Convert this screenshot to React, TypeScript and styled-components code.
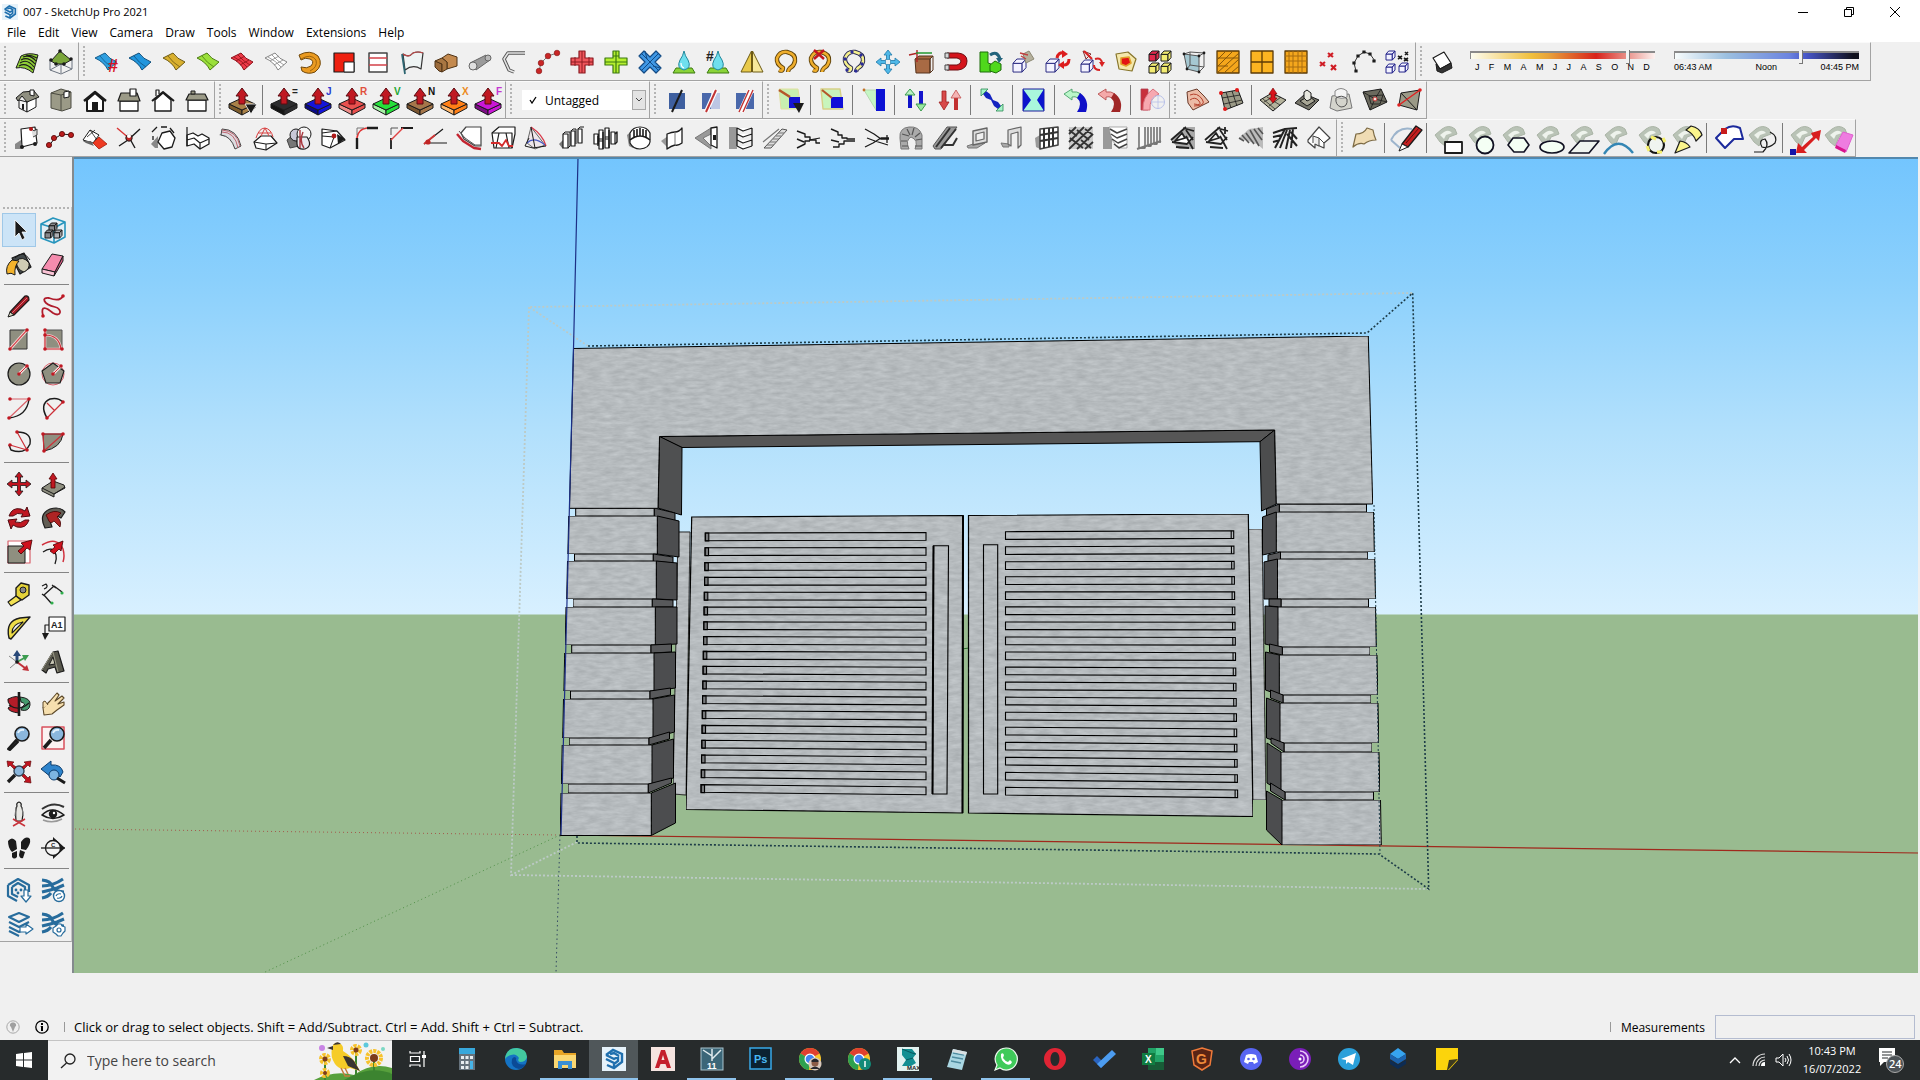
import React from "react";
import styled, { createGlobalStyle, css } from "styled-components";

const GlobalStyle = createGlobalStyle`
  * { box-sizing: border-box; }
  html, body, #root { height: 100%; }
  body { margin: 0; background: #f0f0f0; overflow: hidden; }
  body, button, input, select { font-family: "Open Sans", "Noto Sans", sans-serif; font-size: 12px; color: #000; }
  button { border: 0; padding: 0; background: transparent; }
`;

/* ------------------------------------------------------------------ */
/* Icon drawing                                                        */
/* ------------------------------------------------------------------ */

type Mark = [d: string, fill?: string, stroke?: string, width?: number];
type Label = { text: string; x: number; y: number; size: number; color: string };
type Drawing = { marks: Mark[]; label?: Label };

const K = "#1b1b1b";
const R = "#c01822";
const G = "#8f8f80";
const N = "none";

const dot = (x: number, y: number, r = 1.8) =>
  `M${x - r} ${y}a${r} ${r} 0 1 0 ${2 * r} 0a${r} ${r} 0 1 0 ${-2 * r} 0Z`;
const box = (x: number, y: number, w: number, h: number) => `M${x} ${y}h${w}v${h}h${-w}Z`;
const draw = (...marks: Mark[]): Drawing => ({ marks });

const sheet = (fill: string, edge: string, grid = false): Drawing =>
  draw(
    ["M1 8L11 3Q15 9 23 12L14 20Q10 12 1 8Z", fill, edge, 1],
    [grid ? "M4 7Q12 11 17 17M8 5Q13 11 20 15M6 11L15 6M10 15L19 10" : "M6 6Q11 13 18 17", N, edge, 0.8]
  );

const pushPull = (fill: string, side: string, text = "", color = K): Drawing => ({
  marks: [
    ["M-1 16V20L12 27V22Z", side, K, 1],
    ["M25 16V20L12 27V22Z", fill, K, 1],
    ["M-1 16L12 10L25 16L12 22Z", fill, K, 1],
    ["M12 0L18 8H15V16H9V8H6Z", R, "#5c0a10", 1],
  ],
  label: text ? { text, x: 20, y: 7, size: 10, color } : undefined,
});

const pad = (shape: Mark, extra: Mark[] = []): Drawing =>
  draw(
    ["M-1 9L6 3Q13 -2 19 3L21 8L13 11L9 20L4 16Z", "#b9c3b6", "#aab4a6", 1],
    ["M4 9L8 6Q13 3 16 7L10 9L8 13Z", "#eef3ec", N],
    shape,
    ...extra
  );

const cube = (x: number, y: number, s: number, fill: string, line = K): Mark[] => [
  [`M${x} ${y + s / 3}h${s * 0.7}v${s * 0.67}h${-s * 0.7}Z`, fill, line, 1],
  [`M${x} ${y + s / 3}l${s * 0.3} ${-s / 3}h${s * 0.7}l${-s * 0.3} ${s / 3}ZM${x + s} ${y}v${s * 0.67}l${-s * 0.3} ${s / 3}v${-s * 0.67}Z`, fill, line, 1],
];

const curl = "M5 20Q9 22 9 18Q2 14 3 8Q6 1 13 2Q22 4 21 11Q20 16 16 18Q14 20 14 22";
const plusShape = "M9 1H15V8H23V15H15V23H9V15H1V8H9Z";
const move = "M12 0L16 5H13.5V10.5H19V8L24 12L19 16V13.5H13.5V19H16L12 24L8 19H10.5V13.5H5V16L0 12L5 8V10.5H10.5V5H8Z";
const drop = "M12 1Q13 6 16 10Q20 18 12 20Q4 18 8 10Q11 6 12 1Z";
const stairs = "M0 5L8 8V11H13V14H19V17H23M0 13L7 16M0 22L8 18V15H13";

const icons: Record<string, Drawing> = {
  contour: draw(
    ["M1 18L6 6Q13 2 23 5L18 23Q10 16 1 18Z", "#8fce37", K, 1],
    ["M4 16Q11 12 18 20M5 13Q12 8 19 17M6 10Q13 6 20 14M8 7Q15 4 21 11M11 5Q17 5 22 8", N, K, 1.1]
  ),
  scratch: draw(
    ["M1 10V20L12 24L23 19V10M1 20L12 14L23 19M12 14V23", N, "#6c7480", 1],
    ["M2 11L11 1L22 10L15 14L7 14Z", "#7aa53a", K, 1],
    [dot(11, 1) + dot(2, 10) + dot(22, 9) + dot(7, 14) + dot(15, 14), K]
  ),
  sheetNumber: {
    marks: [...sheet("#2f9fe0", "#135c8c").marks],
    label: { text: "#", x: 14, y: 22, size: 18, color: "#d81324" },
  },
  sheetBlue: sheet("#2196dd", "#0f4f7c"),
  sheetGold: sheet("#d9b02f", "#6d5a14"),
  sheetGreen: sheet("#9be03a", "#4d7c14"),
  sheetRed: sheet("#ee3a48", "#8c1018", true),
  sheetWhite: sheet("#ffffff", "#858585", true),
  extrude: draw(["M1 5Q12 -1 20 6Q26 15 17 22Q10 25 4 21L3 17Q9 19 13 16Q17 11 12 9Q7 7 3 10Z", "#eb9b21", "#70470a", 1], ["M3 9Q13 3 18 10Q20 17 12 21", N, "#a1650c", 1]),
  redSquare: draw([box(2, 3, 20, 19), "#ee2010", K, 1.2], [box(12, 12, 10, 10), "#fff", K, 1]),
  lined: draw([box(3, 3, 18, 19), "#fff", "#444", 1.5], ["M3 8H21M3 15H21", N, "#d4424a", 1.6]),
  flag: draw(["M3 4Q9 8 13 3Q18 1 23 3L21 19Q13 14 5 20Z", "#eef4f4", "#333", 1.2], ["M2 4L5 24", N, "#2b6470", 1.8], ["M3 4Q9 8 13 3Q18 1 23 3", N, "#c04848", 1.2]),
  fold: draw(["M8 8L14 4L23 7V16L13 19V12Z", "#c48a4f", "#4f3316", 1], ["M1 11V17L5 21L8 22V14Z", "#9b6a3a", "#4f3316", 1], ["M1 11L8 8L13 12V19L8 22V14Z", "#a87642", "#4f3316", 1]),
  tube: draw(["M2 13L18 5L22 10L8 20Z", "#9b9b9b", "#666", 1], [dot(20, 8, 3), "#b9b9b9", "#666", 1], [dot(5, 16, 4), "#e0e0e0", "#666", 1]),
  elbow: draw(["M23 3L6 3L2 9L7 20L12 22", N, "#555", 3.5], ["M23 3L6 3L2 9L7 20L12 22", N, "#e4e4e4", 1.6]),
  redDots: draw(["M3 21L5 13L12 6L21 3", N, "#777", 1], [dot(3, 21, 2.8) + dot(5, 13, 2.8) + dot(12, 6, 2.8) + dot(21, 3, 2.8), "#c92626", "#801010", 0.6]),
  crossRed: draw([plusShape, "#f0565c", "#8c1a20", 1.2], ["M12 1V23M1 12H23M5 7V16M19 7V16", N, "#8c1a20", 1]),
  crossGreen: draw([plusShape, "#b5ef2e", "#3c7a10", 1.2], ["M12 1V23M1 12H23M9 6H15", N, "#3c7a10", 1.2]),
  crossBlue: draw(["M6 1L12 7L18 1L23 6L17 12L23 18L18 23L12 17L6 23L1 18L7 12L1 6Z", "#3f97e4", "#124a84", 1.2], ["M3 3L21 21M21 3L3 21M7 1L9 9M15 16L22 18", N, "#124a84", 1]),
  drop: draw(["M4 18H20L23 23H1Z", "#8ad338", "#3c7a10", 1], [drop, "#6fdfee", "#23889c", 1], ["M9 13Q9 17 12 18", N, "#fff", 1.2]),
  dropNumber: { marks: [["M4 18H20L23 23H1Z", "#8ad338", "#3c7a10", 1], [drop, "#6fdfee", "#23889c", 1]], label: { text: "#", x: 0, y: 11, size: 14, color: "#222" } },
  mirror: draw(["M11.5 1V22H1Z", "#e8c94a", "#6d5a14", 1], ["M12.5 1V22H23Z", "#f6e79a", "#6d5a14", 1]),
  curl: draw([curl, N, "#5e420a", 4.4], [curl, N, "#efae2c", 2.6]),
  curlCut: draw([curl, N, "#5e420a", 4.4], [curl, N, "#efae2c", 2.6], ["M6 0L16 9M16 0L6 9", N, "#c3171f", 2.4]),
  curlNode: draw([curl, N, "#23234f", 4.4], [curl, N, "#f5f08c", 2.6], [dot(5, 20, 1.7) + dot(3, 9, 1.7) + dot(10, 2, 1.7) + dot(19, 5, 1.7) + dot(20, 14, 1.7) + dot(14, 21, 1.7), "#2a2b98"]),
  moveBlue: draw([move, "#4fb8e8", "#1f78a8", 0.8], [box(9.5, 9.5, 5, 5), "#f0f0f0", "#1f78a8", 0.6]),
  boxAxis: draw(["M5 9L9 6H23L20 9V23H6Z", "#a86a44", "#56331c", 1], ["M6 9H20V23M20 9L23 6V20L20 23", N, "#56331c", 1], ["M-1 5L8 3M7 0V12", N, "#b02626", 1.4], ["M6 3H22", N, "#2f9c3b", 1.6]),
  magnet: draw(["M3 3H14Q23 4 23 11Q23 19 14 20H3V15H13Q17 14 17 11Q17 9 13 8H3Z", "#d4141c", "#6c0a0e", 1], ["M1 3H5V8H1ZM1 15H5V20H1Z", "#d8d8d8", "#444", 1]),
  greenRotate: draw(["M2 2H10V13L13 14V22H2Z", "#4fd81c", "#1d6c0a", 1], ["M12 15L17 11L23 14V20L18 23L12 21Z", "#4fd81c", "#1d6c0a", 1], ["M12 5Q19 0 22 9", N, "#23647c", 3], ["M18 8H25L21 13Z", "#23647c"]),
  boxFlat: draw(...cube(1, 9, 13, "#f4f3ff", "#2d2d84"), ["M11 4L17 1L22 9L14 13Z", "#b5b09c", "#8c8874", 1], ["M9 6L14 9M8 3L16 5", N, "#c04040", 1.4]),
  boxRotate: draw(...cube(0, 9, 13, "#f4f3ff", "#2d2d84"), ["M11 8Q12 2 18 3M23 9Q23 16 16 15", N, "#dd1c1c", 3], ["M16 0L22 4L16 8ZM18 11L12 15L18 19Z", "#dd1c1c"]),
  boxRed: draw(...cube(1, 10, 12, "#f4f3ff", "#2d2d84"), ["M3 1L11 4L6 9Z", "#ece6e6", "#803030", 1], ["M15 9Q22 7 22 14M20 20Q14 20 14 15M4 1L12 9", N, "#d82222", 2], ["M19 12H25L22 17Z", "#d82222"]),
  redCore: draw(["M2 4L14 2L22 9L18 21L5 19Z", "#f4e8ac", "#86742a", 1.2], ["M7 8L15 7L17 13L12 16L7 14Z", "#e31414", "#e0a02a", 1.6]),
  cubes: draw(...cube(1, 1, 10, "#e0284c"), ...cube(13, 1, 10, "#f3ec72"), ...cube(1, 13, 10, "#f3ec72"), ...cube(13, 13, 10, "#f3ec72")),
  glassBox: draw(["M2 4L17 6V22L5 19Z", "#a5c8d2", "#555", 1], ["M2 4L8 2L22 3L17 6M22 3V17L17 22M8 2V15L5 19M8 15L22 17", N, "#555", 1], [dot(2, 4, 1.4) + dot(22, 3, 1.4) + dot(17, 6, 1.4) + dot(17, 22, 1.4) + dot(5, 19, 1.4), K]),
  tileDiag: draw([box(1, 1, 22, 22), "#f5a71c", "#5c3b06", 1.3], ["M1 10L10 1M1 17L17 1M1 23L23 3M8 23L23 9M15 23L23 16M1 8H23M1 16H12", N, "#87570a", 1]),
  tileFour: draw([box(1, 1, 22, 22), "#fcb421", "#5c3b06", 1.3], ["M12 1V23M1 12H23", N, "#5c3b06", 1.3]),
  tileGrid: draw([box(1, 1, 22, 22), "#f5a71c", "#5c3b06", 1.3], ["M5 1V23M9 1V23M14 1V23M18 1V23M1 6H23M1 11H23M1 17H23", N, "#a86d10", 1]),
  redCrosses: draw(["M10 3L15 7M15 3L10 7M2 12L7 16M7 12L2 16M13 15L18 20M18 15L13 20", N, "#cf1c24", 2.2]),
  arcPoints: draw(["M4 21L2 13L6 6L12 2L18 4L23 11", N, "#333", 1], [[[4, 21], [2, 13], [6, 6], [12, 2], [18, 4], [22, 11]].map(([x, y]) => box(x - 1.6, y - 1.6, 3.2, 3.2)).join(""), K]),
  boxesMany: draw(...cube(0, 1, 9, "#f2f2ff", "#26268c"), ...cube(0, 14, 9, "#f2f2ff", "#26268c"), ...cube(13, 13, 9, "#f2f2ff", "#26268c"), ["M12 6L16 9M16 6L12 9M19 2L22 5M22 2L19 5M18 8L22 11M22 8L18 11", N, K, 1.6]),
  shadow: draw(["M2 8L13 2L20 13L9 19Z", "#fff", K, 1.2], ["M9 19L20 13L21 18L11 23L6 21L5 14Z", "#333", K, 1]),

  isoHouse: draw(["M4 12L12 14V24L4 20Z", "#f4f4f4", K, 1], ["M12 14L21 9V19L12 24Z", "#fff", K, 1], ["M1 10L8 4L19 3L24 9L12 14L7 8L3 13Z", G, K, 1], ["M15 2H19V8L15 7Z", "#fff", K, 1], ["M7 16H9V22L7 21Z", K]),
  topHouse: draw(["M2 5L12 1L22 4V20L13 23L2 20Z", "#9b9a87", "#4c4c42", 1], ["M12 7L22 4M12 7V23M2 5L12 7", N, "#4c4c42", 1], ["M15 4L20 3V9L15 10Z", "#fff", K, 1]),
  frontHouse: draw(["M4 12V23H20V12L12 5Z", "#fff", K, 2], ["M1 13L12 4L23 13", N, K, 2.4], [box(9, 14, 6, 9), K]),
  rightHouse: draw([box(3, 13, 18, 10), "#fff", K, 1.3], ["M4 5H20L23 13H1Z", "#9b9a87", K, 1.2], [box(13, 1, 6, 7), "#fff", K, 1.2]),
  backHouse: draw(["M4 12V23H20V12L12 5Z", "#fff", K, 1.4], ["M1 13L12 4L23 13", N, K, 2], ["M5 8V2H8V6", "#fff", K, 1.2]),
  leftHouse: draw([box(3, 12, 18, 11), "#fff", K, 1.3], ["M4 6H20L23 12H1Z", "#9b9a87", K, 1.2], [box(6, 3, 4, 3), "#9b9a87", K, 1]),
  pushMenu: { marks: [...pushPull("#a98148", "#7d5c2c").marks, ["M15 16H27L21 26Z", K, "#fff", 0.8]] },
  pushEq: pushPull("#2c2c2e", "#151515", "=", "#222"),
  pushJ: pushPull("#1414d8", "#0a0a86", "J", "#2a3bd0"),
  pushR: pushPull("#e8504e", "#f08c88", "R", "#e0503c"),
  pushV: pushPull("#25e03a", "#a5f2a5", "V", "#22a630"),
  pushN: pushPull("#a5764a", "#7a5530", "N", "#111"),
  pushX: pushPull("#ff7f16", "#ffb86c", "X", "#ec8a1c"),
  pushF: pushPull("#c917d6", "#7d0c86", "F", "#c536d2"),
  sectionA: draw([box(4, 5, 16, 16), "#3e5f9f"], ["M7 24L17 2", N, K, 2]),
  sectionB: draw([box(3, 5, 9, 16), "#4a68ab"], [box(12, 5, 9, 16), "#bcc6e4"], ["M7 24L17 2", N, "#fff", 4.4], ["M7 24L17 2", N, "#c23434", 2]),
  sectionC: draw([box(3, 5, 18, 16), "#4a68ab"], ["M8 24L18 2", N, "#fff", 6], ["M6 24L16 2M10 24L20 2", N, "#c23434", 1.4]),
  stretch: draw(["M1 1H20L23 21H3Z", "#c8efb0", "#e0e0a0", 1], [box(11, 9, 11, 11), "#1414d0"], ["M1 2L12 9", N, "#b5562a", 2.6], ["M15 15H26L21 25Z", K]),
  stretchB: draw(["M1 1H20L23 21H3Z", "#c8f5bc", "#d6cf86", 1.4], [box(11, 9, 12, 11), "#1010d8"], ["M2 2L12 10", N, "#b5562a", 2.2]),
  taper: draw(["M2 2H14V22Z", "#c6f7c4", "#b5d8b0", 1], ["M14 1H23V23H14Z", "#0c12d4"], [dot(2, 2, 1.4), "#c4722a"]),
  arrowsBlue: draw(["M4 6H8V20H4Z", "#0f12c8"], ["M6 1L11 7H1Z", "#b8f0c0", "#3c9c50", 1], ["M15 3H19V16H15Z", "#1414cc"], ["M17 23L12 16H22Z", "#9ae8a0", "#3c9c50", 1]),
  arrowsRed: draw(["M4 3H8V14H11L6 22L1 14H4Z", "#d84a4a", "#a02020", 0.8], ["M16 10H20V22H16Z", "#c23030"], ["M18 2L23 10H13Z", "#f4b4b4", "#c05050", 0.8]),
  diagBlue: draw(["M3 6L6 3L10 6L13 12L18 14L21 18L18 21L14 18L11 12L6 10Z", "#1424c0", N], ["M1 1H8L1 8ZM23 23H16L23 16Z", "#a6f3c8", "#2c8a54", 0.8]),
  twist: draw([box(1, 1, 21, 22), "#a9f7dc", "#1a1a9c", 1], ["M1 1L9 12L1 23ZM22 1L15 12L22 23Z", "#0c14cc"]),
  undoBlue: draw(["M0 6L8 1V4Q13 3 17 6L14 10Q11 8 8 9V12Z", "#baf6c9", "#4aa06a", 0.9], ["M16 5Q26 12 22 24H13Q19 15 13 10Z", "#1010c8"]),
  undoRed: draw(["M0 6L8 1V4Q13 3 17 6L14 10Q11 8 8 9V12Z", "#f4aaaa", "#b85050", 0.9], ["M16 5Q26 12 22 24H13Q19 15 13 10Z", "#a02626"]),
  bend: draw([box(1, 1, 7, 21), "#c8303c", "#b04050", 0.8], ["M3 22Q2 9 13 1L19 6Q9 10 10 22Z", "#f7a8b0", "#d8707c", 1], [dot(18, 14, 6.5), N, "#b8c0e8", 1], ["M11 14H25M18 7V21", N, "#b8c0e8", 0.8]),
  sandRed: draw(["M2 4L12 1L19 8L24 14L8 22L3 15Z", "#ecbba6", "#6a3a2a", 1], ["M5 7Q12 4 17 11T9 18M5 12Q10 8 14 13T9 16", N, "#b5402c", 1]),
  sandGrid: draw(["M2 5L19 2L24 15L6 22Z", "#9b9a87", K, 1], ["M7 4L12 20M13 3L18 18M3 10L21 7M5 16L23 12", N, K, 0.8], [dot(2, 5, 2) + dot(18, 2, 2) + dot(6, 21, 2), "#e01818"]),
  smoove: draw(["M-1 12L11 5L25 12L12 23Z", "#b5b39c", K, 1], ["M3 14L15 7M8 18L20 9M6 9L19 17M2 11L14 21", N, K, 0.7], ["M12 0L16 6H14V10H16L12 15L8 10H10V6H8Z", "#d8141c", "#700", 0.6]),
  stamp: draw(["M0 15L10 6L24 12L14 22Z", "#76756a", K, 1], ["M5 13L14 8L20 13L12 18Z", "#a8a695", K, 1], ["M9 4L12 2L16 5V11L12 13L9 10Z", "#e8e8e0", K, 1]),
  drape: draw(["M3 8L20 6L23 20L8 23L1 20Z", "#d4d4cc", "#777", 1], ["M6 3Q12 -2 18 3V9Q12 12 6 8Z", "#f4f4f4", "#888", 1], ["M7 10Q13 6 18 11Q19 19 12 19Q6 17 7 10Z", N, "#555", 1]),
  detail: draw(["M0 4L18 1L24 14L7 22Z", "#6b6a5e", K, 1], ["M0 4L12 11L24 14M18 1L12 11L7 22M6 8L20 7L17 16L8 16Z", N, K, 0.8], [dot(12, 11, 2), "#f6e0d8", "#c03030", 1]),
  flip: draw(["M4 5L23 2L20 22L2 17Z", "#9b9a87", K, 1], ["M4 5L20 22", N, K, 1], ["M2 17L23 2", N, "#e02020", 1.4], [dot(2, 17, 1.8) + dot(23, 2, 1.8), "#e02020"]),

  sheetPin: draw(["M0 18L6 14V23H0Z", "#888"], ["M6 3L20 1L22 17L7 21Z", "#fff", K, 1.2], ["M16 2L19 5L22 3V9L18 11", "#ddd", K, 0.8], [dot(16, 3, 2), "#b01818"], [dot(7, 21, 2) + dot(20, 18, 2), K]),
  redChain: draw(["M0 20L5 13L13 8L23 9", N, K, 1], [dot(0, 19, 2.6) + dot(5, 12, 2.6) + dot(13, 8, 2.6) + dot(22, 9, 2.6), "#b81c1c", "#500", 0.8]),
  redPlane: draw(["M0 14L7 4L16 9L10 17Z", "#fff", K, 1], ["M4 11L12 4M7 4L14 14", N, K, 0.8], ["M10 17L16 11L24 18L16 23Z", "#ee3a22", "#a01c0c", 0.8], ["M0 15L8 15L11 20L3 17Z", "#666"]),
  meet: draw(["M0 2L13 13", N, "#d83434", 1.4], ["M23 3L11 14L2 20M13 13L18 22", N, K, 1.4], [dot(12, 12, 3.2), "#c02424", K, 1], [dot(12, 10, 2), "#fff"]),
  hexDash: draw(["M0 18L7 10V22H4Z", "#888"], ["M11 7L19 5L24 12L21 21L13 23L7 16Z", "#fff", K, 1.3], ["M1 6L6 1M10 1L16 1M19 2L23 7M2 10V14", N, K, 1.3]),
  lShape: draw(["M2 9L8 7L13 10L17 8L24 12V18L15 23L9 18L2 20Z", "#fff", K, 1.3], ["M2 1V20M2 14L9 12L15 17L24 13M15 17V23", N, K, 1.2]),
  pipe: draw(["M0 9L8 5V11Z", "#777"], ["M3 3Q18 3 22 20L16 23Q12 10 2 9Z", "#dcdce0", "#444", 1], ["M3 6Q16 6 19 22M3 4Q18 5 21 20", N, "#c06470", 1]),
  dome: draw(["M1 16L8 10H18L24 17L13 24L3 22Z", "#fff", K, 1.2], ["M1 16L13 18L24 17M13 18V24", N, K, 1], ["M3 12Q6 2 12 2Q18 3 20 11M8 10L12 2L16 10M5 7H18", N, "#d84040", 1]),
  spheres: draw(["M0 14L6 9L12 20L3 22Z", "#777", "#444", 1], [dot(9, 9, 6), "#c8c8d8", K, 1], [dot(17, 8, 7), "#f5f5f5", K, 1], ["M10 11H20Q26 20 18 23Q10 24 10 18Z", "#e8e8ee", K, 1.2], ["M13 4V22M16 6Q12 15 17 22", N, "#a83840", 1.4]),
  arrowBox: draw(["M1 3L16 5L24 14L9 22L1 19Z", "#fff", K, 1.2], ["M1 10L13 11L9 22M1 7L16 5", N, K, 1], [dot(13, 10, 2.4), "#b01c1c"], ["M16 8L24 13L17 18Z", K]),
  fillet: draw(["M2 23V12M12 2H23", N, K, 2.4], ["M2 12Q3 3 12 2", N, "#e03434", 1.6], ["M2 9V2H9", N, "#777", 1]),
  chamfer: draw(["M2 23V12M12 2H24", N, K, 1.8], ["M2 14L14 2", N, "#e04444", 1.4], ["M2 9V2H9", N, "#555", 1]),
  angle: draw(["M1 18L20 3M6 17H24", N, K, 1.2], ["M1 18L12 9", N, "#d03434", 1.8], [dot(5, 16, 2.6), "#c02424"]),
  redShape: draw(["M9 1H24V20H18L7 13L4 7Z", "#fff", "#444", 1.2], ["M0 8L6 15L17 22L24 23", N, "#c42430", 2.4], ["M2 5L8 12L18 19H24", N, "#555", 1]),
  redBox: draw(["M1 7L8 1H24V8L21 22H3Z", "#fff", K, 1.2], ["M1 7H21V22M8 7L5 22M15 7L18 22", N, K, 1.2], ["M0 17H8L11 20L15 14L18 20H22", N, "#d42c2c", 1.8]),
  sail: draw(["M6 1L20 19L10 23L2 17Z", "#eee6ea", "#666", 1], ["M6 1Q18 9 21 20", N, "#d83a4a", 1.4], ["M2 17Q9 10 20 19", N, "#4456c4", 1.2], ["M4 12L0 20L8 22L21 20M6 1L10 22", N, K, 1]),
  bars: draw(["M0 18L4 14V23Z", "#777"], ["M4 8H9V22H4ZM12 5H16V20H12ZM19 3H23V17H19Z", "#fff", K, 1.2], ["M4 8L6 6H11V20L9 22M12 5L14 3H17V18M19 3L21 1H25", N, K, 1]),
  barsMany: draw(["M1 8H5V18H1ZM6 4H10V15H6ZM6 13H10V23H6ZM12 2H16V13H12ZM12 11H16V22H12ZM18 6H22V18H18Z", "#fff", K, 1.2], ["M5 10V20M10 6V23M16 4V22M22 8L24 6V16L22 18", N, K, 1.4]),
  drum: draw(["M0 9L6 4V22L2 20Z", "#888"], ["M3 7V17Q6 23 13 23Q22 22 23 16V7Q20 1 13 1Q6 1 3 7Z", "#fff", K, 1.2], ["M3 14Q13 6 23 14M7 4V11M10 3V10M13 2V10M16 3V10M19 4V11", N, K, 1.6]),
  panel: draw(["M0 15L7 10V22Z", "#999"], ["M6 8Q11 6 14 6Q18 6 21 2V17Q17 20 14 19Q10 20 6 23Z", "#fff", K, 1.3], ["M14 6V19", N, "#777", 1]),
  wall: draw(["M0 12L16 2V8L8 12L16 20V23Z", "#999", "#777", 1], ["M16 2L22 1V22L16 19Z", "#fff", K, 1.3], [box(18, 9, 3, 5), K]),
  louver: draw([box(0, 1, 8, 22), "#999"], ["M8 2L14 5L23 2M8 8L14 11L23 8M8 14L14 17L23 14M8 20L14 23L23 20M8 2V20M23 2V20", "#fff", K, 1.3]),
  ladder: draw(["M1 22L19 3L24 4L8 22Z", "#ddd", "#555", 1], ["M4 19H11M7 16H13M10 13H16M13 10H18M15 7H21M0 16L16 3", N, "#777", 1.2]),
  stairsA: draw([stairs, N, K, 1.4], ["M23 12L12 14", N, K, 1.2]),
  stairsB: draw(["M0 3L7 6V9H11V12H16V13H24M0 14L8 16M2 21H8V18H13V15H24", N, K, 1.4]),
  stairsC: draw(["M0 3L9 8L16 13H24M0 21L8 17L16 12H24M2 12L10 15L23 19M22 9V17", N, K, 1.3]),
  spiral: draw(["M1 12Q0 2 10 1Q20 0 23 9V23H16Q20 14 12 11Q6 14 10 23H2Z", "#aaa", "#777", 1], ["M3 8L10 10M8 3L11 9M15 2L13 9M21 7L16 11M23 13L17 14M2 15H8M3 20H9M16 20H23", N, "#555", 1.2]),
  escalator: draw(["M0 20L14 1H24L8 23H2Z", "#999", "#555", 1], ["M3 21L17 2M8 22L23 3M11 19H20L24 12", N, "#333", 2]),
  frame: draw(["M0 20L6 18L18 17L10 22H1Z", "#aaa", "#777", 1], ["M6 5L20 2V16L6 19Z", "#ddd", "#666", 1.4], ["M9 8L17 6V13L9 15Z", "#f0f0f0", "#666", 1.2]),
  door: draw(["M0 17L8 18V21H2Z", "#aaa", "#777", 1], ["M7 4L20 1V19L17 22V6L10 8V20L7 18Z", "#ddd", "#666", 1.2]),
  grid: draw(["M0 12L5 9V23L1 21Z", "#999"], ["M5 3L23 1V19L5 23Z", "#fff", "#444", 1.6], ["M9 2V22M14 2V21M18 2V20M5 9L23 6M5 15L23 12", N, "#333", 2]),
  lattice: draw([box(0, 1, 24, 22), "#ccc"], ["M0 8L7 1M0 16L15 1M0 23L23 1M8 23L24 8M16 23L24 16M0 4L8 10M8 4L20 14M1 12L14 22M16 3L24 9M12 14L22 22", N, "#333", 1.8]),
  chevrons: draw([box(0, 1, 9, 22), "#999"], ["M6 1H24V22H18Q8 19 6 1Z", "#fff", "#777", 0.6], ["M7 3L14 7L24 3M8 8L14 12L24 8M9 13L15 17L24 13M11 18L16 22L24 18", N, "#444", 1.5]),
  planks: draw(["M2 1V22H8V1M11 1V20H14V1M17 1V18H20V1M23 1V17", "#f8f8f8", "#555", 1.3], ["M0 23L24 15", N, "#777", 2]),
  trussA: draw(["M0 14L16 1H24V23H8Z", "#aaa"], ["M0 14L15 1M4 15L11 7L14 12ZM12 2L23 5M15 4L22 14M1 16L16 18L22 11M5 21L18 22M15 10L22 23", "#fff", "#222", 1.8]),
  trussB: draw(["M0 14L15 1M4 15L11 7L14 12ZM12 2L23 5M15 4L22 14M1 16L16 18L22 11M5 21L18 22M15 10L22 23M20 1V8", N, "#222", 1.8]),
  roofA: draw(["M0 12L10 3L24 1V23L18 18Z", "#bbb"], ["M0 12L5 15M3 9L10 17M7 7L15 18M11 4L20 20M15 3L23 14M19 2L24 8", N, "#555", 1.6]),
  roofB: draw(["M0 7L12 3L24 2M2 22L12 3M7 22L14 4M13 23L17 4M18 22L20 3M0 11L9 9M0 16L7 14M14 8L24 20M18 6L24 13", N, "#222", 2]),
  roofC: draw(["M1 14L12 1L23 12L17 17V22L8 18V22L1 16Z", "#fff", "#444", 1.2], ["M6 10L12 12V20L8 18M12 12L17 17M6 10V17", "#eee", "#444", 1]),
  softSheet: draw(["M1 21L4 8Q12 8 15 2L21 4Q22 10 24 14Q17 14 12 18Q7 16 1 21Z", "#f0dcb4", "#7c6a44", 1.2]),
  bigPencil: draw(["M-3 14Q4 0 18 3M-3 14L6 22", N, "#9cb4cc", 2], ["M8 18L22 0L28 4L14 21Z", "#c42020", K, 1.3], ["M8 18L14 21L5 25Z", "#fff", K, 1], ["M12 17L25 2", N, "#601010", 1]),
  padRect: pad([box(9, 16, 17, 11), "#fff", K, 1.8]),
  padCircle: pad([dot(15, 19, 8.5), "#f4fff4", "#112", 1.8]),
  padHex: pad(["M4 19L9 12H20L25 19L20 26H10Z", "#f4fff4", "#112", 1.6]),
  padEllipse: pad(["M2 21A12 6 0 1 0 26 21A12 6 0 1 0 2 21Z", "#f4fff4", "#112", 1.6]),
  padPara: pad(["M-3 27L8 15H27L17 27Z", "#f0f4f0", "#112", 1.6]),
  padArc: pad(["M-2 28Q12 8 27 27", "#f0f0f0", "#3486b4", 2.4]),
  padTurn: pad([dot(16, 19, 8), "#f0f4f0", "#141414", 2.2], [["M11 11L16 13M23 12L25 16M22 26L17 26M9 25L7 20", N, "#f6f06c", 3]]),
  padCone: pad(["M1 27L6 15Q13 16 16 21Z", "#fbf58c", K, 1.2], [["M12 4L17 0Q26 2 28 9L22 15Q20 8 12 4Z", "#fbf58c", K, 1.2]]),
  bluePoly: draw(["M0 12L9 3Q16 -2 24 2L27 13L18 13L9 22Z", "#fff", "#1c2a9c", 2], [box(5, 2, 6, 6), "#c81c1c"]),
  padScribble: pad(["M20 6Q28 10 25 17Q18 23 12 21Q8 14 15 13Q20 19 13 26H4", N, K, 1.2]),
  padArrow: pad(["M4 27L6 17L10 21L21 11L19 7L29 4L27 15L24 12L12 24L15 27Z", "#d81f1f"], [[box(-2, 23, 6, 6), "#1414a8"]]),
  padEraser: pad(["M10 19L17 6L27 9L20 26Z", "#ee7ce0", "#e060d0", 1], [["M10 19L20 24L19 27L9 22Z", "#d8148c"]]),

  select: draw(["M8 2V19L12 15L15 22L18 20L15 14H20Z", K, "#fff", 0.8]),
  component: draw(["M0 6L12 0L24 4V19L13 25L0 20ZM0 6L13 10L24 4M13 10V25", "#e3eff6", "#2795bd", 1.6], ...cube(8, 5, 8, "#87888c"), ...cube(4, 12, 8, "#87888c"), ...cube(13, 12, 8, "#aeb0b4")),
  bucket: draw(["M5 6L17 1L24 15L13 22Z", "#43494b", K, 1.2], ["M9 9Q16 3 22 11Q23 17 17 20Q10 18 9 9Z", "#cfccb4", K, 1], ["M5 8Q-2 14 0 22Q4 20 8 23Q7 14 12 9Z", "#f3b32c", K, 1], ["M8 6Q16 -3 23 8", N, K, 1]),
  eraser: draw(["M1 17L11 2L22 4L14 20Z", "#f48cae", K, 1], ["M1 17L14 20L13 24L1 21Z", "#fbc4d6", K, 1], ["M22 4V9L13 24L14 20Z", "#d85c84", K, 1]),
  pencil: draw(["M3 18L18 2Q22 1 22 6L7 21Z", "#a31c26", K, 1.2], ["M3 18L7 21L1 23Z", "#d8d8c0", K, 1], ["M5 19L20 4", N, "#e07078", 1]),
  freehand: draw(["M2 22C-1 10 6 14 12 19C20 24 22 15 14 13C2 10 0 3 8 4C16 7 20 6 22 2", N, "#b01c2c", 1.8], [dot(2, 22, 1.8) + dot(22, 2, 1.8), R]),
  rectTool: draw([box(3, 2, 17, 19), G, "#333", 1], ["M3 21L20 2", N, "#f6e2e0", 3], ["M3 21L20 2", N, "#d44a50", 1.2], [dot(3, 21) + dot(20, 2), R]),
  rectRot: draw([box(4, 2, 17, 19), G, "#555", 1], ["M4 2V21H21M4 7Q18 7 20 21", N, "#f0d0d0", 2.6], ["M4 2V21H21M4 7Q18 7 20 21", N, "#cc3038", 1.2], [dot(4, 2) + dot(4, 21) + dot(21, 21) + dot(4, 7), R]),
  circleTool: draw([dot(12, 12, 11), G, K, 1.2], ["M12 12L20 4", N, "#f6dede", 3], ["M12 12L20 4", N, "#cc3038", 1], [dot(12, 12) + dot(20, 4), R]),
  polyTool: draw([dot(12, 12, 11), "#f4e6e4", "#d4606a", 1], ["M12 1L23 9L19 21H5L1 9Z", G, K, 1.1], ["M12 12L20 4", N, "#f6dede", 3], ["M12 12L20 4", N, "#cc3038", 1], [dot(12, 12) + dot(20, 4), R]),
  arcTool: draw(["M2 22Q20 20 22 3", N, K, 1.4], ["M3 3H22L2 22", N, "#d8626a", 1.2], [dot(3, 3) + dot(22, 3) + dot(2, 22), R]),
  arcTwo: draw(["M6 22Q-2 8 9 3Q17 1 22 6", N, K, 1.5], ["M6 22L22 6M6 7L14 15", N, "#cc3038", 1.2], [dot(6, 22) + dot(22, 6), R]),
  arcThree: draw(["M10 2Q25 2 23 14Q18 25 4 20L2 15", N, K, 1.4], ["M10 2L20 20L3 15", N, "#cc3038", 1.2], [dot(10, 2) + dot(20, 20) + dot(3, 15), R]),
  pie: draw(["M2 4H22Q20 18 3 21Z", G, K, 1], ["M2 4H22L3 21Z", N, "#cc3038", 1.2], [dot(2, 4) + dot(22, 4) + dot(3, 21), R]),
  moveRed: draw([move, "#c01420", K, 0.8]),
  pushLeft: draw(["M1 16V19L13 25V22L24 16L23 13L12 9Z", G, K, 1], ["M1 16L13 22L24 15", N, K, 1], ["M12 1L16 7H14V16H10V7H8Z", R, "#500", 0.8]),
  rotateRed: draw(["M2 10Q5 1 14 3L18 5L20 1L23 10L14 11L16 8Q10 6 6 10ZM22 14Q19 23 10 21L6 19L4 23L1 14L10 13L8 16Q14 18 18 14Z", R, "#500a10", 1]),
  follow: draw(["M4 22Q-3 8 9 3Q19 0 24 6L20 12Q10 6 9 15L11 21Z", "#625e55", K, 1.2], ["M5 9Q13 3 20 7L16 11Q21 15 19 21L13 15Q9 19 7 13Z", "#ae2424", "#400", 0.8]),
  scale: draw([box(1, 1, 22, 22), "#fff", "#d8606a", 1.2], [box(1, 6, 17, 17), G, K, 1], ["M11 11L17 6L14 3L25 0L23 10L20 8L14 14Z", "#d0101c", "#400", 0.8]),
  offset: draw(["M1 5Q16 -4 22 9Q24 16 22 22", N, "#d0303c", 1.5], ["M2 12Q12 5 15 15Q16 19 14 24", N, K, 1.3], ["M9 11L14 7L12 5L22 1L20 11L18 9L13 14Z", "#d0101c", "#400", 0.8]),
  tape: draw(["M9 6L14 1L22 3L22 13L15 18L9 14Z", "#e4d23a", K, 1.4], [dot(16, 8, 3), "#888", K, 1], ["M9 14L1 20L4 24L14 18Z", "#f3e252", K, 1.2]),
  dimension: draw(["M3 13L13 4M3 13L10 21M13 4L21 10M1 12L5 15M11 3L15 6", N, K, 1.3], [dot(11, 21, 1.6) + dot(21, 11, 1.6), "#2fae4c"], ["M1 4L5 2Q8 5 3 7", N, K, 1.2]),
  protractor: draw(["M2 22Q-2 5 13 2L23 1L4 23Z", "#eddc48", K, 1.4], ["M5 17Q5 8 16 6Z", "#f0f0f0", K, 1.1]),
  textTool: { marks: [[box(8, 1, 16, 14), "#fff", K, 1.2], ["M8 9H4V19", N, K, 1.2], ["M1 17H8L4 24Z", K]], label: { text: "A1", x: 10, y: 12, size: 9, color: "#222" } },
  axes: draw(["M10 12V4", N, "#284878", 3], ["M6 6L10 0L14 6Z", "#284878"], ["M10 12L19 7", N, "#3c9c50", 2], ["M15 5L22 5L18 11Z", "#3c9c50"], ["M10 12L18 18", N, "#c03038", 2], ["M20 15L22 21L15 20Z", "#c03038"], ["M2 6L10 12L3 18", N, "#888", 1], [dot(10, 12, 1.8), K]),
  text3d: draw(["M1 20L12 2L17 1L23 21L16 23L14 17L7 19L5 23Z", "#59584d", K, 1.2], ["M8 15L12 7L14 14Z", "#c8c6b4", K, 1], ["M12 2L17 22M1 20L12 2", N, "#9b9a87", 1]),
  orbit: draw(["M1 7Q12 2 12 7V21Q2 20 1 16L4 14Q0 10 1 7Z", "#b41c28", K, 1], ["M13 5Q24 6 23 13Q22 20 14 18L16 14Q20 12 14 10Z", "#45996c", K, 1], ["M12 0V24", N, K, 2.6], ["M2 13Q12 20 22 11", N, K, 1.2]),
  pan: draw(["M3 23L2 16L9 9L16 1L18 3L14 9L21 4L23 6L17 12L23 10V13L16 18L11 22Z", "#f6dfae", "#5c4828", 1.1], ["M2 16L2 10L4 9L7 13", "#f6dfae", "#5c4828", 1]),
  zoom: draw(["M1 23L9 14L11 16L3 24Z", "#333", K, 2], [dot(15, 8, 7), "#8bb7dd", K, 1.6], ["M11 7Q12 3 17 4", N, "#e4f2fc", 1.8]),
  zoomWindow: draw([box(1, 1, 22, 22), "#fbf2f2", "#d8505c", 1.5], ["M3 22L10 14", N, K, 3.6], [dot(16, 8, 7), "#8bb7dd", K, 1.6], ["M12 7Q13 3 18 4", N, "#e4f2fc", 1.8]),
  zoomExtents: draw(["M1 22L8 15", N, K, 3.4], [dot(12, 11, 5), "#8bb7dd", "#345", 1.4], ["M0 1L7 2L5 4L9 7L7 9L3 5L1 7ZM24 1L17 2L19 4L15 7L17 9L21 5L23 7ZM24 23L17 22L19 20L15 16L17 14L21 18L23 16Z", "#c01420", "#500", 0.6]),
  previous: draw(["M0 9L10 1V5Q20 4 22 12L19 17Q16 12 10 13V17Z", "#2e84cc", "#0c3c6c", 1], [dot(13, 15, 5), "#7cb4e0", "#0c3c6c", 1], ["M16 18L24 23", N, K, 3]),
  position: draw(["M12 0Q15 1 14 4Q17 8 15 19H9Q8 8 10 4Q9 1 12 0Z", "#e8e8e4", K, 1.2], ["M9 5L8 14M15 5L16 14", N, "#777", 1], ["M6 17L18 24M18 17L6 24", N, "#c8343c", 1.6]),
  eye: draw(["M1 7Q12 -1 23 5", N, "#333", 2], ["M1 13Q11 3 23 13Q12 20 1 13Z", "#e8e8e8", K, 1.6], [dot(12, 12, 4.2), K], [dot(13, 11, 1.2), "#fff"], ["M2 18Q12 22 21 17", N, "#999", 1.6]),
  feet: draw(["M1 5Q5 0 9 5L10 13L5 16Q1 12 1 5ZM5 17L10 15L10 21Q7 24 5 21ZM14 6Q19 -1 23 3Q24 8 19 14L14 13ZM13 14L18 16L16 22Q13 23 12 19Z", K]),
  sectionPlane: { marks: [["M12 1V23L24 12Z", K], [dot(12, 12, 7.5), "#f4f4f4", K, 1.3], ["M0 12H24", N, K, 1.3]], label: { text: "C", x: 10, y: 11, size: 6, color: "#222" } },
  warehouse: draw(["M1 7L11 1L22 7V14M1 7V18L10 23M5 9L11 5L18 9V15M5 9V16L11 19", N, "#276c9c", 2.2], [dot(9, 12, 1.4) + dot(14, 12, 1.4) + dot(11, 15, 1.4), "#276c9c"], ["M17 12H21V18H24L19 24L14 18H17Z", "#fff", "#276c9c", 1.2]),
  shareModel: draw(["M2 5L12 1L22 5L12 10ZM2 10L12 15L22 10M2 15L12 20L16 18M2 19L12 24", N, "#276c9c", 2], ["M13 15H19V12L26 17L19 22V20H13Z", "#fff", "#276c9c", 1.2]),
  extension: draw(["M1 2Q10 3 11 8Q14 14 23 14M1 8Q12 8 22 1M1 14Q10 12 16 10L23 7M1 20Q7 19 10 15", N, "#276c9c", 3], [dot(18, 18, 5.5), "#fff", "#276c9c", 1.4], ["M15 18Q16 15 20 16M21 18Q20 21 16 20", N, "#276c9c", 1.2]),
  extensionGear: draw(["M1 2Q10 3 11 8Q14 14 23 14M1 8Q12 8 22 1M1 14Q10 12 16 10L23 7M1 20Q7 19 10 15", N, "#276c9c", 3], ["M17 12H20L21 14L24 15V19L22 21L20 24H17L15 22L12 20V16L15 14Z", "#fff", "#276c9c", 1.2], [dot(18, 18, 2), N, "#276c9c", 1.2]),
};

const Glyph = styled.svg<{ $size?: number }>`
  width: ${(p) => p.$size ?? 24}px;
  height: ${(p) => p.$size ?? 24}px;
  overflow: visible;
  flex: none;
  display: block;
`;

const Icon = ({ name, size = 24 }: { name: string; size?: number }) => {
  const { marks, label } = icons[name];
  return (
    <Glyph viewBox="0 0 24 24" $size={size} aria-hidden="true">
      {marks.map(([d, fill = N, stroke = N, width = 1], i) => (
        <path key={i} d={d} fill={fill} stroke={stroke} strokeWidth={width} strokeLinejoin="round" />
      ))}
      {label && (
        <text x={label.x} y={label.y} fontSize={label.size} fill={label.color} fontWeight="700" fontFamily="Liberation Sans, sans-serif">
          {label.text}
        </text>
      )}
    </Glyph>
  );
};

/* ------------------------------------------------------------------ */
/* Window frame, title and menu                                        */
/* ------------------------------------------------------------------ */

const Desktop = styled.div`
  display: flex;
  flex-direction: column;
  height: 100vh;
`;

const TitleBar = styled.header`
  display: flex;
  align-items: center;
  height: 23px;
  padding: 0 2px;
  background: #fff;
`;

const Title = styled.h1`
  flex: 1;
  margin: 0;
  padding-left: 5px;
  font-size: 11px;
  font-weight: 400;
`;

const WindowButton = styled.button`
  display: grid;
  place-items: center;
  width: 46px;
  height: 22px;
`;

const MenuBar = styled.nav`
  display: flex;
  height: 19px;
  padding-left: 1px;
  background: #fff;
`;

const MenuItem = styled.button`
  padding: 0 6px;
  line-height: 18px;
`;

/* ------------------------------------------------------------------ */
/* Toolbars                                                            */
/* ------------------------------------------------------------------ */

const ToolbarRow = styled.div<{ $tall?: boolean }>`
  display: flex;
  height: ${(p) => (p.$tall ? 39 : 38)}px;
`;

const ToolGroup = styled.div`
  display: flex;
  align-items: center;
  border-top: 1px solid #fafafa;
  border-right: 1px solid #a3a3a3;
  border-bottom: 1px solid #a3a3a3;
  &::before {
    content: "";
    width: 2px;
    height: 32px;
    margin: 0 4px;
    background: repeating-linear-gradient(#b4b4b4 0 2px, transparent 2px 4px);
  }
`;

const ToolButton = styled.button<{ $active?: boolean }>`
  display: grid;
  place-items: center;
  width: 34px;
  height: 34px;
  ${(p) =>
    p.$active &&
    css`
      background: #cce4f7;
      box-shadow: inset 0 0 0 1px #9fc8e8;
    `}
`;

const Divider = styled.span`
  width: 1px;
  height: 30px;
  margin: 0 4px 0 3px;
  background: #7a7a7a;
`;

const Tools = ({ names, size }: { names: string; size?: number }) => (
  <>
    {names.split(" ").map((name, i) =>
      name === "|" ? (
        <Divider key={i} />
      ) : (
        <ToolButton key={i} type="button" aria-label={name}>
          <Icon name={name} size={size} />
        </ToolButton>
      )
    )}
  </>
);

const TagBox = styled.label`
  display: flex;
  align-items: center;
  gap: 4px;
  position: relative;
  width: 124px;
  height: 20px;
  margin: 0 3px 0 6px;
  padding-left: 7px;
  background: #fff;
`;

const TagSelect = styled.select`
  flex: 1;
  height: 20px;
  padding: 0 4px;
  border: 0;
  background: transparent;
  appearance: none;
`;

const TagArrow = styled.span`
  position: absolute;
  right: 0;
  top: 0;
  display: grid;
  place-items: center;
  width: 14px;
  height: 20px;
  background: #e3e3e3;
  border: 1px solid #a8a8a8;
  pointer-events: none;
`;

const SliderField = styled.label<{ $gap: number }>`
  display: flex;
  flex-direction: column;
  gap: 2px;
  width: 185px;
  margin-left: ${(p) => p.$gap}px;
`;

const Slider = styled.input<{ $track: string }>`
  appearance: none;
  width: 100%;
  height: 8px;
  margin: 0;
  border-top: 2px solid #8a8a8a;
  border-left: 1px solid #8a8a8a;
  background: ${(p) => p.$track};
  &::-webkit-slider-thumb {
    appearance: none;
    width: 4px;
    height: 14px;
    margin-top: 3px;
    background: #f2f2f2;
    border-right: 1px solid #777;
    border-bottom: 1px solid #777;
  }
`;

const SliderScale = styled.span<{ $inset: number }>`
  display: flex;
  justify-content: space-between;
  padding: 0 ${(p) => p.$inset}px;
  font-family: "Liberation Sans", sans-serif;
  font-size: 9px;
  line-height: 12px;
`;

const ShadowEnd = styled.span`
  width: 11px;
`;

/* ------------------------------------------------------------------ */
/* Work area                                                           */
/* ------------------------------------------------------------------ */

const WorkArea = styled.main`
  display: flex;
  flex: 1;
  min-height: 0;
  padding-right: 2px;
`;

const SideBar = styled.aside`
  width: 74px;
  padding-top: 50px;
  border-right: 2px solid #848a8e;
`;

const Palette = styled.div`
  display: grid;
  grid-template-columns: 34px 34px;
  padding: 6px 0 0 2px;
  border-right: 1px solid #c4c4c4;
  border-bottom: 1px solid #a3a3a3;
  background: repeating-linear-gradient(90deg, #b4b4b4 0 2px, transparent 2px 4px) 3px 0 / 66px 2px no-repeat;
`;

const PaletteRule = styled.span`
  grid-column: 1 / -1;
  height: 1px;
  margin: 3px 1px 4px 2px;
  background: #858585;
`;

const Viewport = styled.section`
  flex: 1;
  min-width: 0;
  border-top: 2px solid #5288ae;
`;

const Scene = styled.svg`
  display: block;
  width: 100%;
  height: 100%;
`;

const palette =
  "select component bucket eraser | pencil freehand rectTool rectRot circleTool polyTool arcTool arcTwo arcThree pie | moveRed pushLeft rotateRed follow scale offset | tape dimension protractor textTool axes text3d | orbit pan zoom zoomWindow zoomExtents previous | position eye feet sectionPlane | warehouse extension shareModel extensionGear";

type Block = { top: number; bottom: number; left: number; right: number; side: number; sideTop: number; sideBottom: number };
const toBlock = ([top, bottom, left, right, side, sideTop, sideBottom]: number[]): Block => ({ top, bottom, left, right, side, sideTop, sideBottom });

const leftBlocks = [
  [516, 554, 568.7, 657.3, 679, 521, 557],
  [561, 599, 567.5, 656.3, 677, 563, 600],
  [607, 645, 566, 655.3, 677, 607, 644],
  [653, 691, 564.7, 654, 675.5, 652, 688],
  [699, 738, 563.5, 653, 674.5, 695, 732],
  [745, 784, 562.2, 652, 673.5, 739, 778],
  [793, 835.5, 561, 651.3, 675.5, 783, 823],
].map(toBlock);

const rightBlocks = [
  [512, 552, 1276.3, 1373.5, 1262.5, 517, 555],
  [559, 599, 1277.5, 1374.7, 1264, 562, 599],
  [607, 647, 1278, 1375.5, 1265, 606, 644],
  [655, 695, 1279.3, 1377, 1265.5, 652, 690],
  [703, 743, 1280, 1378, 1266.5, 698, 738],
  [752, 792, 1281, 1379, 1267, 743, 783],
  [800, 845, 1282, 1380.5, 1266.5, 791, 830],
].map(toBlock);

const Pillar = ({ blocks, dir, start }: { blocks: Block[]; dir: 1 | -1; start: number }) => (
  <>
    {blocks.map((b, i) => {
      const inner = dir === 1 ? b.right : b.left;
      const outer = dir === 1 ? b.left : b.right;
      const above = i ? blocks[i - 1].bottom : start;
      const aboveSide = i ? blocks[i - 1].sideBottom : start + 5;
      return (
        <g key={i} stroke="#000" strokeWidth="1">
          <path filter="url(#concrete)" fill="#b6bbbe" d={`M${outer + 7 * dir} ${above}H${inner - 3 * dir}V${b.top}H${outer + 7 * dir}Z`} />
          <path fill="#58595b" d={`M${inner - 3 * dir} ${above}L${b.side - 4 * dir} ${aboveSide}V${b.sideTop}L${inner - 3 * dir} ${b.top}Z`} />
          <path fill="#4c4d4f" d={`M${inner} ${b.top}L${b.side} ${b.sideTop}V${b.sideBottom}L${inner} ${b.bottom}Z`} />
          <path filter="url(#concrete)" fill="#b6bbbe" d={`M${outer} ${b.top}H${inner}V${b.bottom}H${outer - 0.8 * dir}Z`} />
        </g>
      );
    })}
  </>
);

const slots = Array.from({ length: 18 }, (_, i) => i);

const Model = () => (
  <Scene viewBox="74 159 1844 814" preserveAspectRatio="xMidYMid slice" role="img" aria-label="Gate model">
    <defs>
      <linearGradient id="sky" x1="0" y1="0" x2="0" y2="1">
        <stop offset="0" stopColor="#73c5fe" />
        <stop offset="0.27" stopColor="#8bd0fc" />
        <stop offset="0.6" stopColor="#b2e0fc" />
        <stop offset="1" stopColor="#d8f0ff" />
      </linearGradient>
      <filter id="concrete" x="0" y="0" width="1" height="1" colorInterpolationFilters="sRGB">
        <feTurbulence type="fractalNoise" baseFrequency="0.08 0.28" numOctaves="3" seed="4" result="noise" />
        <feColorMatrix in="noise" type="matrix" values="0.14 0 0 0 0  0.14 0 0 0 0  0.14 0 0 0 0  0 0 0 0 1" result="grain" />
        <feComposite in="SourceGraphic" in2="grain" operator="arithmetic" k1="0" k2="1" k3="1" k4="-0.07" result="mix" />
        <feComposite in="mix" in2="SourceGraphic" operator="in" />
      </filter>
    </defs>
    <rect x="0" y="158" width="2000" height="457" fill="url(#sky)" />
    <rect x="0" y="614.500" width="2000" height="400" fill="#99bb90" />

    <g fill="none" strokeWidth="1">
      <path d="M560 835L73 829" stroke="#a35a4c" strokeDasharray="1 3" />
      <path d="M560 835L263 973" stroke="#4f8f46" strokeDasharray="1 3" />
      <path d="M560 835L556 973" stroke="#344a64" strokeDasharray="1.5 3" />
      <path d="M560 835L1918 853" stroke="#a0281c" strokeWidth="1.2" />
      <path d="M962 649L969 648" stroke="#2c6c2c" />
    </g>
    <path
      d="M588 346L529 307L1413 293M529 307L511 875L577 842M511 875L1428 889"
      fill="none"
      stroke="#bccac6"
      strokeWidth="1.8"
      strokeDasharray="2 2"
    />

    <g filter="url(#concrete)" fill="#b6bbbe" stroke="#333" strokeWidth="1">
      <path d="M678 532H690L686 795L673 794Z" />
      <path d="M1248 529H1262L1266 800H1253Z" />
    </g>
    <path fill="#565656" stroke="#000" d="M659.5 436.5L1274.7 430L1260 441.7L682 447.5Z" />
    <path fill="#4f5051" stroke="#000" d="M659.5 436.5L682 447.5L681.5 515L658 508Z" />
    <path fill="#4c4d4e" stroke="#000" d="M1274.7 430L1260 441.7L1261.5 511L1276.3 504Z" />
    <Pillar blocks={leftBlocks} dir={1} start={508} />
    <Pillar blocks={rightBlocks} dir={-1} start={504} />
    <path
      filter="url(#concrete)"
      fill="#b6bbbe"
      stroke="#000"
      d="M573.5 348.5L1368.3 336L1372.7 504H1276.3L1274.7 430L659.5 436.5L658 508.3H569.5Z"
    />

    <g filter="url(#concrete)" fill="#b6bbbe" stroke="#000" strokeWidth="1.2">
      <path d="M691.7 517L963.3 515.5L962.5 813L686 809.5Z" />
      <path d="M968.5 515.5L1248.3 514L1253 816.5L968.5 813Z" />
    </g>
    <path d="M963 516L962.5 813" stroke="#000" strokeWidth="2" />
    <g fill="none" stroke="#000" strokeWidth="1.1">
      {slots.map((i) => {
        const y = 533 + i * 14.8;
        const x = 705.3 - i * 0.25;
        const yr = 532.5 + i * 14.97;
        return (
          <g key={i}>
            <path fill="#77797b" d={`M${x} ${y}h3.5v8h-3.5Z`} />
            <path d={`M${x} ${y}L926 ${yr}V${yr + 7.7}L${x} ${y + 7.7}Z`} />
          </g>
        );
      })}
      {slots.map((i) => {
        const y = 531.7 + i * 15.04;
        const yr = 530.7 + i * 15.25;
        const x = 1233.7 + i * 0.23;
        return (
          <g key={i}>
            <path d={`M${x - 2.5} ${yr}V${yr + 7.7}`} />
            <path d={`M1005.5 ${y}L${x} ${yr}V${yr + 7.7}L1005.5 ${y + 7.7}Z`} />
          </g>
        );
      })}
      <path d="M933.5 545.7H948.5L947 794H932.5Z" />
      <path d="M983.5 544.7H997.7V794H983.5Z" />
      <path d="M933.5 545.7L932.5 794" strokeWidth="2" />
    </g>

    <g fill="none" stroke="#1d3c48" strokeWidth="1.6" strokeDasharray="2 2">
      <path d="M588 346L1367 333L1412.7 293L1428.7 889L1379 854L577 843V836" />
      <path d="M1374 505L1380 854" strokeWidth="1" />
    </g>
    <path d="M578 158L573.5 348.5L561 835" fill="none" stroke="#1c2f86" strokeWidth="1.2" />
  </Scene>
);

/* ------------------------------------------------------------------ */
/* Status bar                                                          */
/* ------------------------------------------------------------------ */

const StatusBar = styled.footer`
  display: flex;
  align-items: center;
  height: 67px;
  padding: 41px 5px 0 6px;
`;

const StatusGlyph = styled.span`
  display: flex;
  width: 29px;
`;

const StatusRule = styled.span`
  width: 1px;
  height: 10px;
  background: #999;
`;

const StatusText = styled.span`
  flex: 1;
  padding-left: 9px;
  font-size: 13px;
`;

const MeasureLabel = styled.label`
  padding: 0 10px;
`;

const MeasureInput = styled.input`
  width: 200px;
  height: 24px;
  border: 1px solid #b4bcd0;
  background: #f0f0f0;
`;

/* ------------------------------------------------------------------ */
/* Taskbar                                                             */
/* ------------------------------------------------------------------ */

const TaskBar = styled.nav`
  display: flex;
  align-items: center;
  height: 40px;
  background: #272b2c;
  color: #fff;
`;

const StartButton = styled.button`
  display: grid;
  place-items: center;
  width: 48px;
  height: 40px;
`;

const SearchBox = styled.label`
  display: flex;
  align-items: center;
  gap: 10px;
  width: 344px;
  height: 40px;
  margin-right: 1px;
  padding-left: 11px;
  background: #f2f2f2;
  border-top: 1px solid #c4c4c4;
`;

const SearchInput = styled.input`
  flex: 1;
  min-width: 0;
  border: 0;
  padding: 0;
  background: transparent;
  font-size: 14px;
  &::placeholder { color: #444; opacity: 1; }
`;

const AppButton = styled.button<{ $running?: boolean; $active?: boolean }>`
  display: grid;
  place-items: center;
  width: 49px;
  height: 40px;
  border-bottom: 2px solid ${(p) => (p.$running ? "#8fc3ec" : "transparent")};
  background: ${(p) => (p.$active ? "#50575a" : "transparent")};
  background-clip: padding-box;
`;

const Tray = styled.div`
  display: flex;
  align-items: center;
  gap: 8px;
  margin-left: auto;
  padding-right: 11px;
`;

const TrayButton = styled.button`
  display: grid;
  place-items: center;
  width: 16px;
  height: 40px;
`;

const Clock = styled.time`
  display: flex;
  flex-direction: column;
  width: 66px;
  font-size: 11px;
  line-height: 18px;
  text-align: center;
`;

const NotifyButton = styled(TrayButton)`
  width: 36px;
`;

const Svg = ({ size, children, w = 24, h = 24 }: { size?: number; children: React.ReactNode; w?: number; h?: number }) => (
  <svg width={size ?? w} height={size ?? h} viewBox={`0 0 ${w} ${h}`} aria-hidden="true">
    {children}
  </svg>
);

const SketchLogo = () => (
  <>
    <rect width="24" height="24" fill="#e6f2fa" />
    <g fill="none" stroke="#1f6fae" strokeWidth="2.4">
      <path d="M4 8L11 3L20 7V15L12 21L5 18" />
      <path d="M4 12L12 16V21M4 8L12 12L16 10V14L12 17M8 7L12 6L17 9" />
    </g>
  </>
);

const Chrome = () => (
  <>
    <circle cx="12" cy="12" r="11" fill="#f7c62c" />
    <path d="M12 12L2.500 6.500A11 11 0 0 1 21.500 6.500Z" fill="#e0402f" />
    <path d="M12 12L2.500 6.500A11 11 0 0 0 11 23Z" fill="#2ea150" />
    <circle cx="12" cy="12" r="5.500" fill="#fff" />
    <circle cx="12" cy="12" r="4.300" fill="#4384f0" />
  </>
);

const bold = { fontFamily: "Liberation Sans, sans-serif", fontWeight: 700 } as const;

const apps: { name: string; running?: boolean; active?: boolean; art: React.ReactNode }[] = [
  { name: "Calculator", art: <><rect x="4" y="1" width="16" height="22" fill="#66727c" /><rect x="4" y="1" width="16" height="6" fill="#38a8dc" /><path d="M6 9h3v3H6zM10.500 9h3v3h-3zM15 9h3v3h-3zM6 14h3v3H6zM10.500 14h3v3h-3zM6 19h3v3H6zM10.500 19h3v3h-3z" fill="#e8edf0" /><path d="M15 14h3v8h-3z" fill="#46b4e8" /></> },
  { name: "Edge", art: <><circle cx="12" cy="12" r="11" fill="#1573c4" /><path d="M1 12Q2 1 13 1Q23 2 23 10Q22 15 16 15Q13 14 15 11Q12 6 7 8Q3 9 1 12Z" fill="#43c9a0" /><path d="M8 12Q6 20 15 22Q20 21 22 17Q14 19 12 13Q13 11 11 10Q9 10 8 12Z" fill="#0b4a96" /></> },
  { name: "File Explorer", running: true, art: <><path d="M1 3h8l2 3h12v15H1z" fill="#e8a526" /><path d="M1 8h22v13H1z" fill="#fbd872" /><path d="M5 14h14v8h-4v-4H9v4H5z" fill="#3a90d4" /></> },
  { name: "SketchUp", running: true, active: true, art: <SketchLogo /> },
  { name: "AutoCAD", art: <><rect width="24" height="24" fill="#f5e4e0" /><path d="M4 21L10 3H14L20 21H16L14.500 17H9.500L8 21ZM10.500 13H13.500L12 8Z" fill="#c41f2c" /></> },
  { name: "Engine 11", running: true, art: <><rect x="1" y="1" width="22" height="22" fill="#3b6678" stroke="#a9c4ce" /><path d="M3 3L12 9V14M12 2V14M21 3L12 12" stroke="#dfeaee" strokeWidth="1.500" fill="none" /><text x="7" y="22" fontSize="9" fill="#fff" {...bold}>11</text></> },
  { name: "Photoshop", art: <><rect x="1" y="1" width="21" height="21" fill="#0b2231" stroke="#38a9e8" strokeWidth="1.500" /><text x="5" y="16" fontSize="11" fill="#49b8f5" {...bold}>Ps</text></> },
  { name: "Chrome profile", running: true, art: <><Chrome /><circle cx="17" cy="17" r="6.500" fill="#d8c8bc" /><circle cx="17" cy="16" r="3.500" fill="#8c5c46" /><path d="M13 14Q17 9 21 14L20 15H14ZM12 22Q17 17 22 22Z" fill="#27272c" /></> },
  { name: "Chrome", art: <><Chrome /><circle cx="18" cy="17" r="6" fill="#128a78" /><path d="M18 14V20" stroke="#fff" strokeWidth="1.500" /></> },
  { name: "3ds Max", running: true, art: <><rect x="1" y="0" width="22" height="24" fill="#e2f2f1" /><path d="M6 2H16L20 7L17 11L20 16L15 19H6L10 13L6 8Z" fill="#138f92" /><path d="M6 2L16 6L20 7M10 13L17 11" stroke="#075a60" fill="none" /><text x="11" y="23" fontSize="6" fill="#222" {...bold}>MAX</text></> },
  { name: "Notepad", art: <><path d="M8 2L22 5L17 23L2 20Z" fill="#a9d6e2" /><path d="M8 6L19 8M7 10L18 12M6 14L16 16" stroke="#4f8ca0" strokeWidth="1.500" /><path d="M8 2L22 5L21 8L7 5Z" fill="#d8dfe2" /></> },
  { name: "WhatsApp", running: true, art: <><path d="M12 1A11 11 0 1 1 6 21L1 23L3 18A11 11 0 0 1 12 1Z" fill="#3fca5a" stroke="#eefaf0" strokeWidth="1.200" /><path d="M7 7Q9 5 10 8L9 11Q11 14 14 15L16 13L18 15Q17 19 12 17Q6 13 7 7Z" fill="#fff" /></> },
  { name: "Opera", art: <path fillRule="evenodd" d="M12 1A11 11 0 1 1 12 23A11 11 0 1 1 12 1ZM12 5C6 5 6 19 12 19C18 19 18 5 12 5Z" fill="#e02434" /> },
  { name: "To Do", art: <><path d="M1 13L5 9L13 17L9 21Z" fill="#2a64c0" /><path d="M9 21L5 17L20 3L24 7Z" fill="#4c9cf0" /></> },
  { name: "Excel", art: <><path d="M7 1h16v22H7z" fill="#21a366" /><path d="M15 1h8v7h-8z" fill="#3fc98a" /><path d="M7 15h16v8H7z" fill="#185c37" /><rect x="1" y="6" width="13" height="12" fill="#107c41" /><text x="4" y="16" fontSize="10" fill="#fff" {...bold}>X</text></> },
  { name: "Gaming", art: <><path d="M12 1L22 4L20 18L12 23L4 18L2 4Z" fill="#5a2414" stroke="#ef7a3a" strokeWidth="1.500" /><text x="6" y="17" fontSize="14" fill="#ef8a3a" {...bold}>G</text></> },
  { name: "Discord", art: <><circle cx="12" cy="12" r="11" fill="#5865f2" /><path d="M7 8Q12 6 17 8L19 15L15 17L14 15H10L9 17L5 15Z" fill="#fff" /><circle cx="9.500" cy="12" r="1.300" fill="#5865f2" /><circle cx="14.500" cy="12" r="1.300" fill="#5865f2" /></> },
  { name: "Podcasts", art: <><circle cx="12" cy="12" r="11" fill="#7a1eb8" /><path d="M12 4A8 8 0 0 1 12 20M12 8A4 4 0 0 1 12 16" fill="none" stroke="#e8c8f8" strokeWidth="1.600" /><circle cx="12" cy="12" r="1.500" fill="#fff" /></> },
  { name: "Telegram", art: <><circle cx="12" cy="12" r="11" fill="#2ba0da" /><path d="M4 12L19 6L16 18L11 15L9 17V13Z" fill="#fff" /></> },
  { name: "Stack", art: <><path d="M12 1L20 7L12 12L4 7Z" fill="#36a4f0" /><path d="M4 7L12 12L20 7V12L12 17L4 12Z" fill="#1c64b0" /><path d="M4 13L12 18L20 13V17L12 22L4 17Z" fill="#0d2c54" /></> },
  { name: "Sticky Notes", art: <><path d="M1 1h22v12l-9 10H1z" fill="#fcd40c" /><path d="M12 23L14 13L23 12L13 23Z" fill="#3d3a20" /></> },
];

const menus = ["File", "Edit", "View", "Camera", "Draw", "Tools", "Window", "Extensions", "Help"];

export default function App() {
  return (
    <Desktop>
      <GlobalStyle />
      <TitleBar>
        <Glyph $size={16} viewBox="0 0 24 24" aria-hidden="true"><SketchLogo /></Glyph>
        <Title>007 - SketchUp Pro 2021</Title>
        <WindowButton type="button" aria-label="Minimize"><Svg w={12} h={12}><path d="M1 6.500H11" stroke="#000" /></Svg></WindowButton>
        <WindowButton type="button" aria-label="Restore"><Svg w={12} h={12}><path d="M1.500 3.500h7v7h-7zM3.500 3.500v-2h7v7h-2" fill="none" stroke="#000" /></Svg></WindowButton>
        <WindowButton type="button" aria-label="Close"><Svg w={12} h={12}><path d="M1 1L11 11M11 1L1 11" stroke="#000" /></Svg></WindowButton>
      </TitleBar>
      <MenuBar aria-label="Menu">
        {menus.map((m) => <MenuItem key={m} type="button">{m}</MenuItem>)}
      </MenuBar>

      <ToolbarRow $tall>
        <ToolGroup><Tools names="contour scratch" /></ToolGroup>
        <ToolGroup>
          <Tools names="sheetNumber sheetBlue sheetGold sheetGreen sheetRed sheetWhite extrude redSquare lined flag fold tube elbow redDots crossRed crossGreen crossBlue drop dropNumber mirror curl curlCut curlNode moveBlue boxAxis magnet greenRotate boxFlat boxRotate boxRed redCore cubes glassBox tileDiag tileFour tileGrid redCrosses arcPoints boxesMany" />
        </ToolGroup>
        <ToolGroup>
          <Tools names="shadow" />
          <SliderField $gap={10}>
            <Slider type="range" aria-label="Month" defaultValue={86} $track="linear-gradient(90deg,#fdfdf0,#f0bf3c 33%,#e8a33a 42%,#d8221a 68%,#e88c84 84%,#fdf2f0)" />
            <SliderScale $inset={5}>{"JFMAMJJASOND".split("").map((m, i) => <span key={i}>{m}</span>)}</SliderScale>
          </SliderField>
          <SliderField $gap={19}>
            <Slider type="range" aria-label="Time" defaultValue={69} $track="linear-gradient(90deg,#f8fcfc,#9cc0e0 28%,#6c84e0 62%,#4654c4 72%,#10101c 97%)" />
            <SliderScale $inset={0}><span>06:43 AM</span><span>Noon</span><span>04:45 PM</span></SliderScale>
          </SliderField>
          <ShadowEnd />
        </ToolGroup>
      </ToolbarRow>

      <ToolbarRow>
        <ToolGroup><Tools names="isoHouse topHouse frontHouse rightHouse backHouse leftHouse" /></ToolGroup>
        <ToolGroup><Tools names="pushMenu | pushEq pushJ pushR pushV pushN pushX pushF" /></ToolGroup>
        <ToolGroup>
          <TagBox>
            <Svg w={8} h={8}><path d="M1 4L3 7L7 1" fill="none" stroke="#000" strokeWidth="1.300" /></Svg>
            <TagSelect aria-label="Tag"><option>Untagged</option></TagSelect>
            <TagArrow><Svg w={8} h={6}><path d="M1 1L4 4L7 1" fill="none" stroke="#444" /></Svg></TagArrow>
          </TagBox>
        </ToolGroup>
        <ToolGroup><Tools names="sectionA sectionB sectionC" /></ToolGroup>
        <ToolGroup><Tools names="stretch | stretchB | taper | arrowsBlue arrowsRed | diagBlue | twist | undoBlue undoRed | bend" /></ToolGroup>
        <ToolGroup><Tools names="sandRed sandGrid | smoove stamp drape detail flip" /></ToolGroup>
      </ToolbarRow>

      <ToolbarRow>
        <ToolGroup>
          <Tools names="sheetPin redChain redPlane meet hexDash lShape pipe dome spheres arrowBox fillet chamfer angle redShape redBox sail bars barsMany drum panel wall louver ladder stairsA stairsB stairsC spiral escalator frame door grid lattice chevrons planks trussA trussB roofA roofB roofC" />
        </ToolGroup>
        <ToolGroup>
          <Tools names="softSheet | bigPencil | padRect padCircle padHex padEllipse padPara padArc padTurn padCone | bluePoly padScribble | padArrow padEraser" />
        </ToolGroup>
      </ToolbarRow>

      <WorkArea>
        <SideBar>
          <Palette>
            {palette.split(" ").map((name, i) =>
              name === "|" ? (
                <PaletteRule key={i} />
              ) : (
                <ToolButton key={i} type="button" aria-label={name} $active={name === "select"}>
                  <Icon name={name} />
                </ToolButton>
              )
            )}
          </Palette>
        </SideBar>
        <Viewport><Model /></Viewport>
      </WorkArea>

      <StatusBar>
        <StatusGlyph><Svg w={14} h={14}><circle cx="7" cy="7" r="6.200" fill="none" stroke="#a8a8a8" /><path d="M7 2.500A2.500 2.500 0 0 1 9 7L7 12L5 7A2.500 2.500 0 0 1 7 2.500Z" fill="#a0a0a0" /></Svg></StatusGlyph>
        <StatusGlyph><Svg w={14} h={14}><circle cx="7" cy="7" r="6.200" fill="none" stroke="#000" strokeWidth="1.300" /><path d="M6 3h2v2H6zM5.500 6H8v5H6V7z" fill="#000" /></Svg></StatusGlyph>
        <StatusRule />
        <StatusText>Click or drag to select objects. Shift = Add/Subtract. Ctrl = Add. Shift + Ctrl = Subtract.</StatusText>
        <StatusRule />
        <MeasureLabel htmlFor="measure">Measurements</MeasureLabel>
        <MeasureInput id="measure" />
      </StatusBar>

      <TaskBar>
        <StartButton type="button" aria-label="Start"><Svg w={16} h={16}><path d="M0 2L7 1V7.500H0ZM8 1L16 0V7.500H8ZM0 8.500H7V15L0 14ZM8 8.500H16V16L8 15Z" fill="#fff" /></Svg></StartButton>
        <SearchBox>
          <Svg w={18} h={18}><circle cx="11" cy="7" r="5" fill="none" stroke="#222" strokeWidth="1.300" /><path d="M7.500 11L2 16" stroke="#222" strokeWidth="1.300" /></Svg>
          <SearchInput placeholder="Type here to search" aria-label="Search" />
          <Svg w={78} h={38}>
            <path d="M0 38Q20 28 40 33Q58 20 78 26V38Z" fill="#57a03c" />
            <path d="M40 33Q60 24 78 32V38H30Z" fill="#3c8430" />
            {[[11, 17, 5], [42, 8, 5], [60, 16, 8], [11, 31, 4]].map(([x, y, r]) => (
              <g key={`${x}-${y}`}>
                <path d={`M${x} ${y}V38`} stroke="#3c8430" strokeWidth="2" />
                <circle cx={x} cy={y} r={r - 1} fill="none" stroke="#f7c22c" strokeWidth="4" strokeDasharray="3 1" />
                <circle cx={x} cy={y} r={r / 2} fill="#7c3c1c" />
              </g>
            ))}
            <path d="M18 6Q19 0 25 1Q30 3 29 9Q37 14 41 20L46 29L36 26Q26 29 21 22Q16 15 18 6Z" fill="#f6cc28" />
            <path d="M29 14Q36 14 40 19L46 29L34 24Z" fill="#3a3430" />
            <path d="M13 6L19 4V8ZM19 3Q23 -2 27 2Z" fill="#3a3430" />
            <path d="M27 26L31 34L36 34M31 26L34 32" stroke="#c67c3c" strokeWidth="1.500" fill="none" />
            <circle cx="8" cy="6" r="3" fill="#c884e4" /><circle cx="52" cy="3" r="2.500" fill="#5cc8dc" /><circle cx="69" cy="7" r="2" fill="#7cd8c4" />
          </Svg>
        </SearchBox>
        <AppButton type="button" aria-label="Task view"><Svg w={18} h={18}><path d="M1 1V3H11V1M1 17V15H11V17M1.500 6.500H10.500V11.500H1.500ZM15 1V17" fill="none" stroke="#fff" strokeWidth="1.200" /><path d="M13 5h4v3h-4z" fill="#fff" /></Svg></AppButton>
        {apps.map((a) => (
          <AppButton key={a.name} type="button" aria-label={a.name} $running={a.running} $active={a.active}>
            <Svg size={24}>{a.art}</Svg>
          </AppButton>
        ))}
        <Tray>
          <TrayButton type="button" aria-label="Hidden icons"><Svg w={12} h={8}><path d="M1 7L6 2L11 7" fill="none" stroke="#fff" strokeWidth="1.300" /></Svg></TrayButton>
          <TrayButton type="button" aria-label="Network"><Svg w={16} h={16}><path d="M2 14A12 12 0 0 1 14 2M5 14A9 9 0 0 1 14 5M8 14A6 6 0 0 1 14 8" fill="none" stroke="#ddd" strokeWidth="1.200" /><path d="M10 14A4 4 0 0 1 14 10V14Z" fill="#fff" /></Svg></TrayButton>
          <TrayButton type="button" aria-label="Volume"><Svg w={17} h={16}><path d="M1 6H4L8 2V14L4 10H1Z" fill="none" stroke="#fff" /><path d="M10 6Q12 8 10 10M12 4Q15 8 12 12M14 2Q18 8 14 14" fill="none" stroke="#fff" /></Svg></TrayButton>
          <Clock><span>10:43 PM</span><span>16/07/2022</span></Clock>
          <NotifyButton type="button" aria-label="Notifications">
            <Svg w={28} h={28}><path d="M2 2H18V16H7L3 20V16H2Z" fill="#fff" /><path d="M5 6H15M5 9H15M5 12H11" stroke="#272b2c" /><circle cx="18" cy="18" r="8.500" fill="#4d5357" stroke="#aaa" /><text x="12" y="22" fontSize="11" fill="#fff" fontFamily="Open Sans, sans-serif" fontWeight="600">24</text></Svg>
          </NotifyButton>
        </Tray>
      </TaskBar>
    </Desktop>
  );
}
